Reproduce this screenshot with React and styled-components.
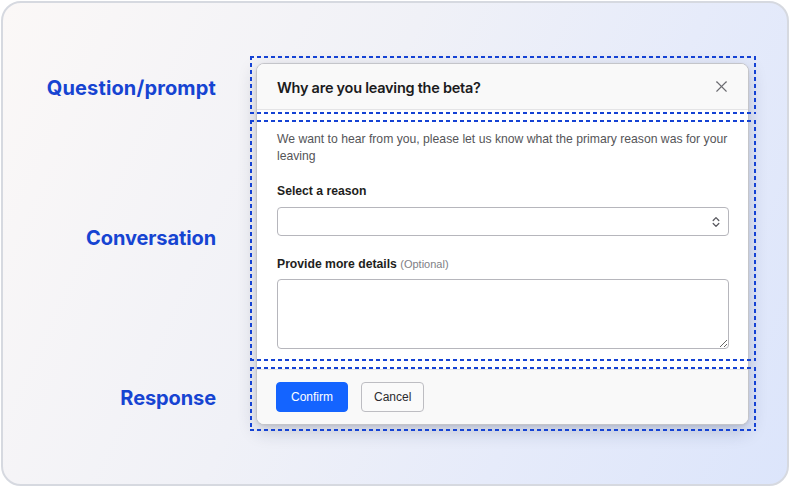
import React from 'react';
import styled, { createGlobalStyle } from 'styled-components';
import { X } from 'lucide-react';

const GlobalStyle = createGlobalStyle`
  html, body {
    margin: 0;
    padding: 0;
    background: #ffffff;
  }
  * {
    box-sizing: border-box;
  }
`;

const Card = styled.div`
  margin: 1px;
  width: 788px;
  height: 485px;
  border: 2px solid #d6d9e0;
  border-radius: 20px;
  background: linear-gradient(115deg, #fbf8f7 0%, #f0f1f7 42%, #e6ebfa 70%, #dce5fb 100%);
  padding-top: 60px;
  display: grid;
  grid-template-columns: 213px 493px;
  grid-template-rows: auto auto auto;
  column-gap: 40px;
  align-content: start;
`;

const SideLabel = styled.div`
  grid-column: 1;
  grid-row: ${(p) => p.$row};
  align-self: center;
  justify-self: end;
  margin-top: ${(p) => p.$shift || 0}px;
  font-family: Inter, "Noto Sans", sans-serif;
  font-weight: 700;
  font-size: 20px;
  color: #1644d2;
  letter-spacing: ${(p) => p.$spacing ?? 0.15}px;
`;

const Dialog = styled.div`
  grid-column: 2;
  grid-row: 1 / 4;
  display: grid;
  grid-template-rows: subgrid;
  border: 1px solid #c4c5ca;
  border-radius: 8px;
  background: #ffffff;
  box-shadow: 0 6px 18px rgba(30, 40, 70, 0.22), 0 1px 3px rgba(0, 0, 0, 0.08);
  font-family: "Liberation Sans", Arial, sans-serif;
`;

const Header = styled.div`
  height: 46px;
  padding: 0 20px;
  display: flex;
  align-items: center;
  justify-content: space-between;
  background: #f9f9f9;
  border-bottom: 1px solid #e4e4e6;
  border-radius: 7px 7px 0 0;
`;

const Title = styled.h2`
  margin: 1px 0 0;
  font-family: Inter, "Noto Sans", sans-serif;
  font-weight: 600;
  font-size: 14.5px;
  color: #1b1b1d;
  letter-spacing: -0.25px;
`;

const CloseButton = styled.span`
  display: flex;
  margin-right: -3px;
  color: #6b6b70;
`;

const Body = styled.div`
  padding: 21px 19px 20px 20px;
  display: flex;
  flex-direction: column;
`;

const Description = styled.p`
  margin: 0 0 18px;
  font-size: 12.2px;
  line-height: 17px;
  color: #555558;
`;

const FieldLabel = styled.label`
  display: block;
  margin: ${(p) => (p.$first ? '0 0 7px' : '20px 0 6px')};
  font-size: 12.2px;
  line-height: 17px;
  font-weight: 700;
  color: #1e1e20;
`;

const Optional = styled.span`
  font-weight: 400;
  font-size: 11px;
  color: #808086;
`;

const SelectBox = styled.div`
  height: 29px;
  border: 1px solid #b6b6bc;
  border-radius: 4px;
  background: #fff;
  display: flex;
  align-items: center;
  justify-content: flex-end;
  padding-right: 8px;
  color: #5a5a60;
`;

const TextArea = styled.textarea`
  display: block;
  width: 100%;
  height: 70px;
  margin: 0;
  border: 1px solid #b6b6bc;
  border-radius: 4px;
  background: #fff;
  font-family: inherit;
  outline: none;
`;

const Footer = styled.div`
  padding: 12px 19px;
  display: flex;
  gap: 13px;
  background: #f9f9f9;
  border-top: 1px solid #e4e4e6;
  border-radius: 0 0 7px 7px;
`;

const Button = styled.button`
  height: 30px;
  padding: 0 ${(p) => (p.$primary ? 14 : 12)}px;
  border-radius: 4px;
  border: 1px solid ${(p) => (p.$primary ? '#1464ff' : '#bdbdc2')};
  background: ${(p) => (p.$primary ? '#1464ff' : '#fafafa')};
  color: ${(p) => (p.$primary ? '#ffffff' : '#2b2b2e')};
  font-family: "Liberation Sans", Arial, sans-serif;
  font-size: 12px;
`;

const dash = (dir) =>
  `repeating-linear-gradient(${dir}, #1442d4 0 4px, transparent 4px 7px)`;

const Frame = styled.div`
  grid-column: 2;
  grid-row: ${(p) => p.$row};
  margin: ${(p) => p.$top}px -7px ${(p) => p.$bottom}px -6px;
  pointer-events: none;
  z-index: 2;
  background:
    ${dash('90deg')} top left / 100% 2px no-repeat,
    ${dash('90deg')} bottom left / 100% 2px no-repeat,
    ${dash('180deg')} top left / 2px 100% no-repeat,
    ${dash('180deg')} top right / 2px 100% no-repeat;
`;

const UpDown = () => (
  <svg width="8" height="12" viewBox="0 0 8 12" fill="none" stroke="currentColor" strokeWidth="1.3" strokeLinecap="round" strokeLinejoin="round">
    <polyline points="1.2,4.5 4,1.6 6.8,4.5" />
    <polyline points="1.2,7.5 4,10.4 6.8,7.5" />
  </svg>
);

const App = () => {
  return (
    <>
      <GlobalStyle />
      <Card>
        <SideLabel $row={1} $shift={2}>Question/prompt</SideLabel>
        <SideLabel $row={2} $shift={-3} $spacing={-0.1}>Conversation</SideLabel>
        <SideLabel $row={3} $shift={1} $spacing={-0.1}>Response</SideLabel>

        <Dialog>
          <Header>
            <Title>Why are you leaving the beta?</Title>
            <CloseButton>
              <X size={19} strokeWidth={1.4} />
            </CloseButton>
          </Header>
          <Body>
            <Description>
              We want to hear from you, please let us know what the primary reason was for your leaving
            </Description>
            <FieldLabel $first>Select a reason</FieldLabel>
            <SelectBox>
              <UpDown />
            </SelectBox>
            <FieldLabel>
              Provide more details <Optional>(Optional)</Optional>
            </FieldLabel>
            <TextArea />
          </Body>
          <Footer>
            <Button $primary>Confirm</Button>
            <Button>Cancel</Button>
          </Footer>
        </Dialog>

        <Frame $row={1} $top={-7} $bottom={-4} />
        <Frame $row={2} $top={10} $bottom={8} />
        <Frame $row={3} $top={-2} $bottom={-6} />
      </Card>
    </>
  );
};

export default App;
